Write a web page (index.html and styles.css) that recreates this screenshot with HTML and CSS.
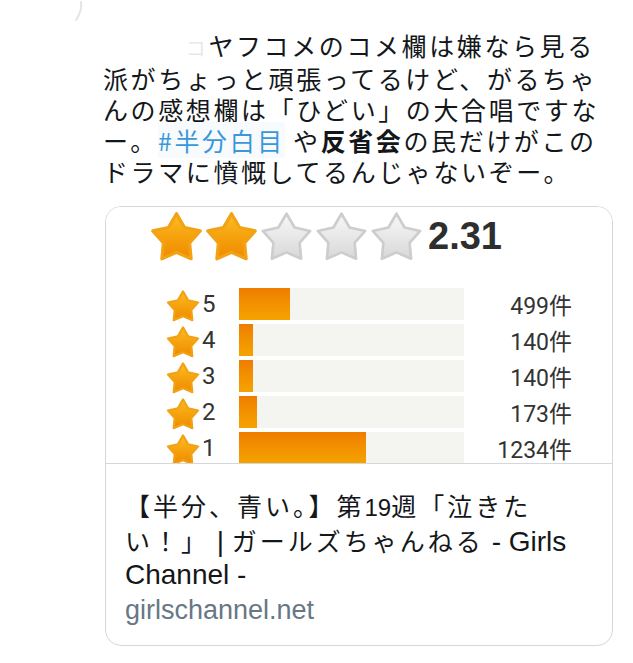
FILE: index.html
```html
<!DOCTYPE html>
<html lang="ja">

<head>
    <meta charset="UTF-8">
    <meta name="viewport" content="width=device-width, initial-scale=1.0">
    <title>Tweet</title>
    <link rel="stylesheet" href="styles.css">
</head>

<body>
    <svg class="defs" width="0" height="0">
        <defs>
            <linearGradient id="gold" x1="0" y1="0" x2="0" y2="1">
                <stop offset="0" stop-color="#fbbd22" />
                <stop offset="0.55" stop-color="#f5a00c" />
                <stop offset="1" stop-color="#ee8a00" />
            </linearGradient>
            <linearGradient id="grey" x1="0" y1="0" x2="0" y2="1">
                <stop offset="0" stop-color="#f8f8f8" />
                <stop offset="1" stop-color="#d8d8d8" />
            </linearGradient>
            <symbol id="star" viewBox="0 0 50 50">
                <polygon points="25,3.5 32.64,16.48 47.35,19.74 37.36,31.02 38.81,46.01 25,40 11.19,46.01 12.64,31.02 2.65,19.74 17.36,16.48" />
            </symbol>
        </defs>
    </svg>

    <div class="mark">
        <svg width="12" height="24" viewBox="0 0 12 24">
            <path d="M8 2 C9 8 7 14 3 20" fill="none" stroke="#e2e4e6" stroke-width="2" stroke-linecap="round" />
        </svg>
    </div>

    <p class="tweet">
        　　　<span class="faint">コ</span>ヤフコメのコメ欄は嫌なら見る<br>
        派がちょっと頑張ってるけど、がるちゃ<br>
        んの感想欄は「ひどい」の大合唱ですな<br>
        ー。<a class="hashtag">#半分白目</a> や<strong>反省会</strong>の民だけがこの<br>
        ドラマに憤慨してるんじゃないぞー。
    </p>

    <div class="card">
        <div class="card-image">
            <div class="rating">
                <div class="big-stars">
                    <svg class="star gold"><use href="#star" /></svg>
                    <svg class="star gold"><use href="#star" /></svg>
                    <svg class="star empty"><use href="#star" /></svg>
                    <svg class="star empty"><use href="#star" /></svg>
                    <svg class="star empty"><use href="#star" /></svg>
                </div>
                <span class="score">2.31</span>
            </div>

            <div class="rows">
                <div class="row">
                    <div class="label"><svg class="mini gold"><use href="#star" /></svg>5</div>
                    <div class="track"><div class="fill" style="width: 22.8%"></div></div>
                    <div class="count">499件</div>
                </div>
                <div class="row">
                    <div class="label"><svg class="mini gold"><use href="#star" /></svg>4</div>
                    <div class="track"><div class="fill" style="width: 6%"></div></div>
                    <div class="count">140件</div>
                </div>
                <div class="row">
                    <div class="label"><svg class="mini gold"><use href="#star" /></svg>3</div>
                    <div class="track"><div class="fill" style="width: 6.4%"></div></div>
                    <div class="count">140件</div>
                </div>
                <div class="row">
                    <div class="label"><svg class="mini gold"><use href="#star" /></svg>2</div>
                    <div class="track"><div class="fill" style="width: 8%"></div></div>
                    <div class="count">173件</div>
                </div>
                <div class="row">
                    <div class="label"><svg class="mini gold"><use href="#star" /></svg>1</div>
                    <div class="track"><div class="fill" style="width: 56.4%"></div></div>
                    <div class="count">1234件</div>
                </div>
            </div>
        </div>

        <div class="card-body">
            <div class="title">
                <span class="jp">【半分、青い。】第</span><span class="num">19</span><span class="jp">週「泣きた</span><br>
                <span class="jp">い！」</span> | <span class="jp">ガールズちゃんねる</span> - Girls<br>
                Channel -
            </div>
            <div class="domain">girlschannel.net</div>
        </div>
    </div>
</body>

</html>
```

FILE: styles.css
```css
body {
    margin: 0;
    padding: 0;
    background-color: #ffffff;
    font-family: "Noto Sans CJK JP", sans-serif;
    color: #14171a;
}

.defs {
    display: block;
    width: 0;
    height: 0;
}

.mark {
    height: 24px;
    padding-left: 73px;
}

.mark svg {
    display: block;
}

.tweet {
    margin: 6px 0 0 0;
    padding-left: 103px;
    font-size: 25px;
    line-height: 31px;
    letter-spacing: 2.6px;
    white-space: nowrap;
}

.faint {
    color: #e6e9eb;
    font-size: 20px;
}

.hashtag {
    color: #3a97d9;
    background-color: #f7fbfd;
}

.tweet strong {
    font-weight: bold;
}

/* link card */

.card {
    width: 508px;
    box-sizing: border-box;
    margin: 19px 0 0 105px;
    border: 1px solid #d4d8db;
    border-radius: 16px;
    overflow: hidden;
}

.card-image {
    height: 256px;
    overflow: hidden;
    border-bottom: 1px solid #d4d8db;
    background-color: #ffffff;
}

.rating {
    display: flex;
    align-items: center;
    padding: 3px 0 0 44px;
    height: 53px;
}

.big-stars {
    display: flex;
    gap: 2px;
}

.star {
    width: 53px;
    height: 53px;
}

.gold {
    fill: url(#gold);
    stroke: #f3a214;
    stroke-width: 3;
    stroke-linejoin: round;
}

.empty {
    fill: url(#grey);
    stroke: #cdcdcd;
    stroke-width: 2.5;
    stroke-linejoin: round;
}

.score {
    margin-left: 5px;
    font-family: "Liberation Sans", Arial, sans-serif;
    font-weight: bold;
    font-size: 38px;
    color: #2e2e2e;
}

.rows {
    margin-top: 25px;
    padding-left: 60px;
    display: flex;
    flex-direction: column;
    gap: 4px;
}

.row {
    display: flex;
    align-items: center;
    height: 32px;
}

.label {
    width: 73px;
    display: flex;
    align-items: center;
    font-family: Roboto, sans-serif;
    font-size: 24px;
    color: #333333;
}

.mini {
    width: 34px;
    height: 34px;
    margin: 4px 2px 0 0;
}

.track {
    width: 225px;
    height: 32px;
    background-color: #f4f4f1;
}

.fill {
    height: 100%;
    background: linear-gradient(#ef7c00, #f29000 45%, #f5a300);
}

.count {
    width: 108px;
    text-align: right;
    font-family: Roboto, "Noto Sans CJK JP", sans-serif;
    font-size: 23px;
    color: #333333;
}

.card-body {
    padding: 25px 20px 18px 19px;
}

.title {
    font-family: "Liberation Sans", Arial, "Noto Sans CJK JP", sans-serif;
    font-size: 28px;
    line-height: 33px;
    color: #14171a;
    white-space: nowrap;
}

.jp {
    font-family: "Noto Sans CJK JP", sans-serif;
    font-size: 25px;
    letter-spacing: 3px;
}

.num {
    font-size: 24px;
}

.domain {
    margin-top: 3px;
    font-family: "Liberation Sans", Arial, sans-serif;
    font-size: 27px;
    line-height: 33px;
    color: #687785;
}
```
